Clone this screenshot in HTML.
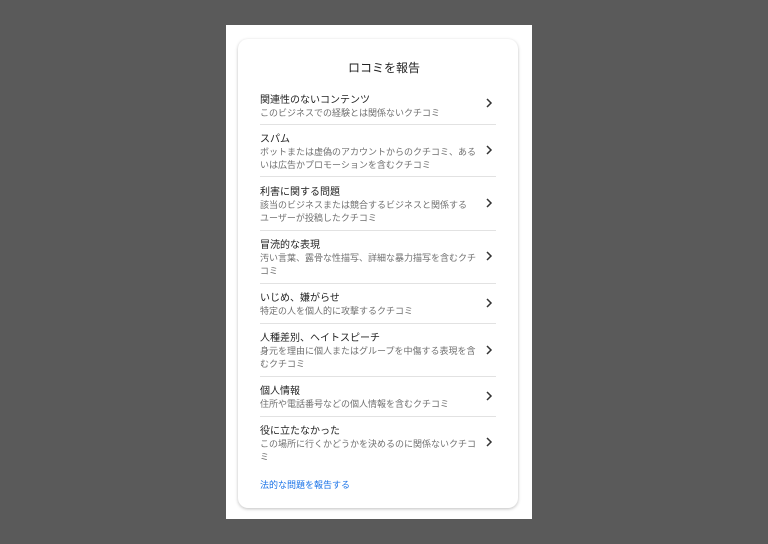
<!DOCTYPE html>
<html><head><meta charset="utf-8"><style>
body{margin:0;width:768px;height:544px;background:#5a5a5a;position:relative;overflow:hidden;font-family:"Liberation Sans","Noto Sans CJK JP",sans-serif}
.panel{position:absolute;left:226px;top:25px;width:306px;height:494px;background:#fff}
.card{position:absolute;left:238px;top:39px;width:280px;height:469px;background:#fff;border-radius:10px;box-shadow:0 1px 3px rgba(0,0,0,.25)}
.t{position:absolute;left:0;width:768px;text-align:center;top:59px;font-size:12px;color:#222}
.it{position:absolute;left:260px;width:220px}
.h{font-size:10px;line-height:13px;color:#222;white-space:nowrap}
.d{font-size:9px;line-height:13px;color:#707070;white-space:nowrap}
.sep{position:absolute;left:260px;width:236px;height:1px;background:#e2e2e2}
.ch{position:absolute;left:485px;width:8px;height:10px}
.lk{position:absolute;left:260px;top:478px;font-size:9px;color:#1a73e8}
</style></head><body>
<div class="panel"></div><div class="card"></div>
<div class="t">ロコミを報告</div>

<div class="it" style="top:94px"><div class="h">関連性のないコンテンツ</div><div class="d">このビジネスでの経験とは関係ないクチコミ</div></div>
<div class="sep" style="top:124px"></div>
<div class="it" style="top:133px"><div class="h">スパム</div><div class="d">ボットまたは虚偽のアカウントからのクチコミ、ある<br>いは広告かプロモーションを含むクチコミ</div></div>
<div class="sep" style="top:176px"></div>
<div class="it" style="top:186px"><div class="h">利害に関する問題</div><div class="d">該当のビジネスまたは競合するビジネスと関係する<br>ユーザーが投稿したクチコミ</div></div>
<div class="sep" style="top:230px"></div>
<div class="it" style="top:239px"><div class="h">冒涜的な表現</div><div class="d">汚い言葉、露骨な性描写、詳細な暴力描写を含むクチ<br>コミ</div></div>
<div class="sep" style="top:283px"></div>
<div class="it" style="top:292px"><div class="h">いじめ、嫌がらせ</div><div class="d">特定の人を個人的に攻撃するクチコミ</div></div>
<div class="sep" style="top:323px"></div>
<div class="it" style="top:332px"><div class="h">人種差別、ヘイトスピーチ</div><div class="d">身元を理由に個人またはグループを中傷する表現を含<br>むクチコミ</div></div>
<div class="sep" style="top:376px"></div>
<div class="it" style="top:385px"><div class="h">個人情報</div><div class="d">住所や電話番号などの個人情報を含むクチコミ</div></div>
<div class="sep" style="top:416px"></div>
<div class="it" style="top:425px"><div class="h">役に立たなかった</div><div class="d">この場所に行くかどうかを決めるのに関係ないクチコ<br>ミ</div></div>

<svg class="ch" style="top:98px" viewBox="0 0 8 10"><path d="M2 1l4 4-4 4" fill="none" stroke="#333" stroke-width="1.5"/></svg>
<svg class="ch" style="top:145px" viewBox="0 0 8 10"><path d="M2 1l4 4-4 4" fill="none" stroke="#333" stroke-width="1.5"/></svg>
<svg class="ch" style="top:198px" viewBox="0 0 8 10"><path d="M2 1l4 4-4 4" fill="none" stroke="#333" stroke-width="1.5"/></svg>
<svg class="ch" style="top:251px" viewBox="0 0 8 10"><path d="M2 1l4 4-4 4" fill="none" stroke="#333" stroke-width="1.5"/></svg>
<svg class="ch" style="top:298px" viewBox="0 0 8 10"><path d="M2 1l4 4-4 4" fill="none" stroke="#333" stroke-width="1.5"/></svg>
<svg class="ch" style="top:345px" viewBox="0 0 8 10"><path d="M2 1l4 4-4 4" fill="none" stroke="#333" stroke-width="1.5"/></svg>
<svg class="ch" style="top:391px" viewBox="0 0 8 10"><path d="M2 1l4 4-4 4" fill="none" stroke="#333" stroke-width="1.5"/></svg>
<svg class="ch" style="top:437px" viewBox="0 0 8 10"><path d="M2 1l4 4-4 4" fill="none" stroke="#333" stroke-width="1.5"/></svg>

<div class="lk">法的な問題を報告する</div>
</body></html>
